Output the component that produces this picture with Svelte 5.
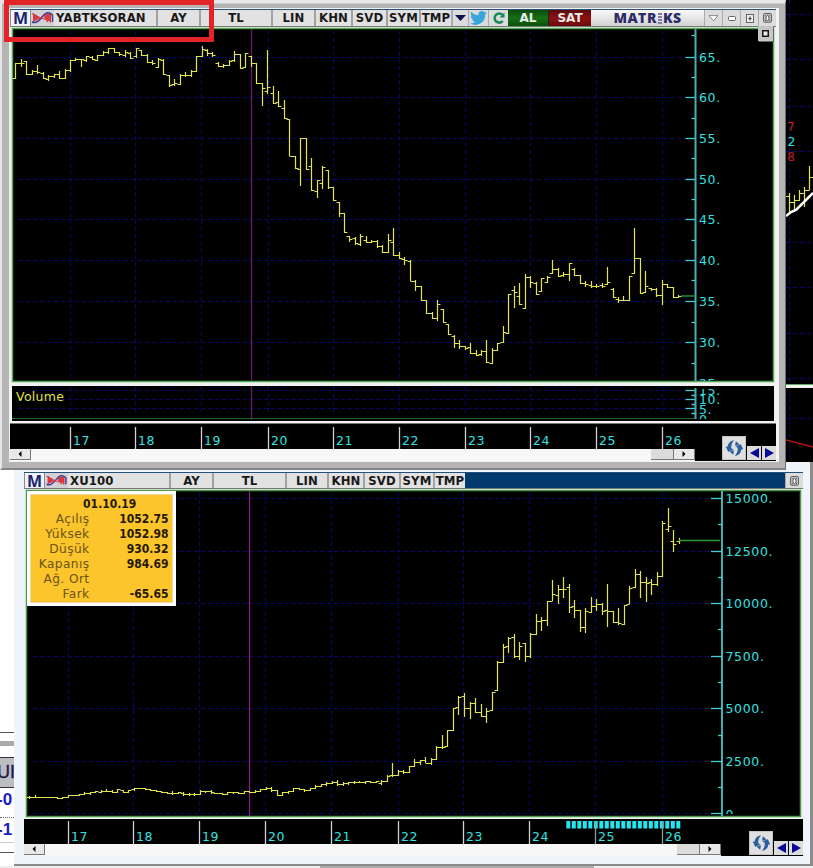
<script>
  // Bars are "high low open close", in thirds of a pixel below y0.
  const parse = (text, y0) =>
    text.trim().split(/\s*,\s*/).map((row) => row.split(' ').map((v) => y0 + Number(v) / 3));

  const ratio = [
    ...parse(`190 235 235 190,178 200 190 190,183 222 183 222,210 224 222 215,195 220 215 218,217 236 220 235,
      225 240 238 228,222 232 228 222,214 235 222 234,208 236 235 210,182 215 210 182,175 182 182 178,
      178 200 178 178,168 183 182 170,170 178 172 178,166 180 180 166,155 167 166 156,145 160 158 146,
      145 156 146 156,156 165 157 162,150 168 165 158,158 176 160 174,145 172 170 146,150 166 150 166,
      164 188 166 188,180 192 188 190,176 203 202 177,178 222 180 222,225 258 225 256,238 256 252 250,
      222 254 252 226,218 228 226 225,210 228 226 213,168 215 213 168,140 170 168 148,148 165 150 160,
      158 168 160 167,188 200 190 200,193 202 200 195,182 196 196 184,155 184 182 163`, 0),
    ...parse(`42 86 43 86,40 82 82 40,48 80 50 70,70 130 70 130,130 195 130 145,32 160 153 142,138 190 160 190,
      155 198 188 198,182 235 205 235,238 346 238 348,350 386 350 386,295 435 388 295,295 388 295 388,
      355 450 378 450,422 472 455 422,380 445 430 382,390 445 392 443,442 480 443 480,486 528 488 520,
      520 576 520 577,588 605 588 597,592 612 596 611,584 615 612 590,590 608 600 608,600 608 607 603,
      600 622 603 618,615 636 618 636,583 636 636 600,564 646 606 646,636 655 646 656`, 40),
    ...parse(`172 192 178 180,182 242 185 245,240 270 244 258,258 302 258 302,302 340 302 340,336 355 340 355,
      302 360 355 314,328 366 328 366,374 404 374 404,406 443 408 430,422 445 430 438,438 448 438 446,
      430 460 442 460,452 467 460 467,450 467 463 454,422 487 454 487,446 490 490 450,430 450 450 430,
      380 428 428 397,284 400 400 284,258 322 272 277,250 314 288 314,224 325 325 232,230 262 232 248,
      248 284 250 284,235 274 274 236,230 248 246 232,182 220 220 208,205 228 208 228,216 228 226 224,
      190 240 224 190,205 226 207 226,225 250 225 250,245 258 250 252,245 262 256 259,254 262 258 258,
      250 262 256 260,202 252 254 247,266 292 268 292,293 306 298 300,288 302 300 300,230 300 300 230,
      85 220 220 176,175 280 175 280,215 278 278 260,264 270 266 268,265 288 267 287,240 312 287 253,
      253 262 253 262,262 292 262 292,287 293 292 288`, 200)
  ];

  const index = [
    ...parse(`228 235 232 231,227 232 231 232,232 232 232 232,232 232 232 232,232 232 232 232,232 236 232 236,
      232 236 236 233,226 233 232 226,226 226 226 226,224 226 226 224,217 224 223 220,216 222 220 217,
      215 218 217 215,212 217 216 213,208 214 213 213,210 216 213 216,208 217 216 209,210 217 211 217,
      210 218 217 210,204 211 209 206,206 206 206 206,206 207 206 207,208 212 208 211,210 213 211 213,
      213 218 213 218,218 221 218 220,215 223 220 219,216 220 219 217,218 226 219 224,220 226 224 223,
      220 226 224 222,212 223 222 213,213 217 213 214,212 219 214 218,219 221 219 221,220 224 221 223,
      218 224 223 218,216 220 218 218,217 220 218 219,213 219 219 213,213 216 213 216,212 216 216 213,
      208 214 213 209,202 209 209 206,203 215 206 212,210 226 212 225,216 225 225 217,213 219 217 213,
      206 214 213 206,206 209 206 208,209 214 209 210,206 211 210 206,197 206 206 198,192 200 198 193,
      187 196 193 190,183 190 190 187,182 196 187 194,188 196 194 190,186 192 190 188,184 190 188 187,
      185 188 187 186,184 189 186 185,183 188 185 187,183 188 187 184`, 720),
    ...parse(`662 672 670 664,645 664 664 648,610 648 646 645,630 647 645 633,630 640 633 638,618 638 638 619,
      598 620 619 607,600 612 607 601,592 608 601 610,596 612 610 597,558 597 597 562,527 564 562 562,
      510 560 560 510,445 510 510 445,410 462 443 411,400 470 408 446,427 476 446 430,415 458 430 458,
      434 468 458 468,446 488 468 454,397 450 450 397,303 390 392 307,254 306 307 262,231 278 260 235,
      222 292 233 290,246 297 290 258,250 304 251 290,220 292 288 224,163 224 224 183,172 210 183 180,
      124 196 182 124,62 122 124 104,77 131 105 88,52 112 88 88,74 157 82 142,120 173 138 152,
      150 215 152 203,145 218 203 154,112 158 156 140,118 152 138 132,130 164 134 153,73 200 150 154,
      154 188 154 188,145 192 188 190,135 194 194 135,80 131 132 84,28 82 82 44,33 113 44 67,
      52 124 68 70,58 104 66 74,37 76 74 50,-117 48 50 -110,-155 -85 -93 -102,-88 -25 -57 -46,
      -65 -50 -57 -60`, 560)
  ];

  const snap = (v) => Math.floor(v) + 0.5;
  const barPath = (bars, x0, step) =>
    bars
      .map(([hi, lo, open, close], i) => {
        const x = snap(x0 + i * step);
        return `M${x - 3} ${snap(open)}H${x}M${x} ${snap(hi) - 0.5}V${snap(lo) + 0.5}M${x} ${snap(close)}H${x + 3}`;
      })
      .join('');

  const ratioPath = barPath(ratio, 15.7, 5.48);
  const indexPath = barPath(index, 29.6, 5.505);

  const years = [17, 18, 19, 20, 21, 22, 23, 24, 25, 26];
  const yearsA = [70.5, 135.5, 201.5, 268.5, 333.5, 399.5, 465.5, 530.5, 596.5, 662.5];
  const yearsB = [68.5, 133.5, 199.5, 265.5, 331.5, 398.5, 463.5, 529.5, 595.5, 662.5];
  const levelsA = [[65, 57.5], [60, 97.5], [55, 138.5], [50, 179.5], [45, 219.5], [40, 260.5], [35, 301.5], [30, 342.5], [25, 383.5]];
  const minorA = [35.5, 77.5, 118.5, 158.5, 199.5, 240.5, 280.5, 322.5, 363.5];
  const levelsB = [[15000, 498.5], [12500, 551.5], [10000, 603.5], [7500, 656.5], [5000, 708.5], [2500, 761.5]];
  const minorB = [524.5, 577.5, 629.5, 682.5, 735.5, 787.5];
  const volume = [[15, 390.5], [10, 399.5], [5, 408.5]];
  const blocks = Array.from({ length: 21 }, (_, i) => 566.3 + i * 5.5);

  const toolsA = [['AY', 43], ['TL', 72], ['LIN', 43], ['KHN', 37], ['SVD', 35], ['SYM', 33], ['TMP', 32]];
  const toolsB = [['AY', 43], ['TL', 73], ['LIN', 42], ['KHN', 36], ['SVD', 36], ['SYM', 34], ['TMP', 32]];
  const quote = [['Açılış', '1052.75'], ['Yüksek', '1052.98'], ['Düşük', '930.32'], ['Kapanış', '984.69'], ['Ağ. Ort', ''], ['Fark', '-65.65']];
</script>

{#snippet wave()}
  <svg class="wave" width="23" height="16" viewBox="0 0 23 16">
    <path d="M2 3V12L9 8.500ZM13 5.500L16 3.500L20 4V12.500H18.500V11H17V12H15.500V10H13.500Z" fill="#dc3a42" />
    <path d="M1 12C5 14 8 11 11 7S17 1 21.500 5V12" fill="none" stroke="#3a3c94" stroke-width="1.500" />
    <path d="M1 3.500C4 4 7 8 13 9" fill="none" stroke="#d8323c" stroke-width="1.200" />
  </svg>
{/snippet}

{#snippet closeIcon()}
  <svg width="9" height="10" viewBox="0 0 9 10">
    <rect x=".6" y=".6" width="7.8" height="8.6" rx="1" fill="#ccc" stroke="#555" />
    <ellipse cx="4.5" cy="5" rx="1.6" ry="2.6" fill="#fff" stroke="#444" stroke-width=".9" />
    <path d="M2 2.2l1.2 1.2M7 2.2L5.800 3.400M2 8l1.200-1.200M7 8L5.800 6.800" stroke="#444" stroke-width=".8" />
  </svg>
{/snippet}

{#snippet foot(xs, x0, width, dots)}
  <div class="foot">
    <div class="time" style="width: {width}px">
      <svg {width} height="25" viewBox="{x0} 0 {width} 25">
        {#if dots}
          {#each blocks as b}<rect x={b} y="2" width="4" height="7.500" fill="#25e6ee" />{/each}
        {/if}
        {#each xs as x, i}
          <path d="M{x} {dots ? 2 : 3}V25" stroke={dots && i > 7 ? '#8b9c9e' : '#d0d0d0'} stroke-width="1.3" />
          <text x={x + 2.5} y={dots ? 21.500 : 21} class="num">{years[i]}</text>
        {/each}
      </svg>
      <div class="scroll">
        <span class="sbtn"><svg width="4" height="6" viewBox="0 0 4 6"><path d="M3.500 0V6L.5 3Z" /></svg></span>
        <span class="track"></span>
        <span class="thumb"></span>
        <span class="sbtn"><svg width="4" height="6" viewBox="0 0 4 6"><path d="M.5 0V6L3.500 3Z" /></svg></span>
      </div>
    </div>
    <div class="nav">
      <span class="sync">
        <svg width="19" height="18" viewBox="0 0 19 18">
          <path d="M9.200 1.200C5.500 1.600 3 4 2.700 7.600L.8 7.800L3.200 12.800L8.600 10.800L6.300 9.200C6 6 7 3.500 9.200 1.200Z" fill="#2b5f9e" />
          <path d="M4.500 12.500L9 11.200L8.200 15.800L7 14.800Z" fill="#2b5f9e" />
          <path d="M9.800 16.800C13.500 16.400 16 14 16.300 10.400L18.200 10.200L15.800 5.200L10.400 7.200L12.700 8.800C13 12 12 14.500 9.800 16.800Z" fill="#2b5f9e" />
          <path d="M14.500 5.500L10 6.800L10.800 2.200L12 3.200Z" fill="#2b5f9e" />
        </svg>
      </span>
      <span class="step"><svg width="9" height="10" viewBox="0 0 9 10"><path d="M9 0V10L0 5Z" /></svg></span>
      <span class="step"><svg width="9" height="10" viewBox="0 0 9 10"><path d="M0 0V10L9 5Z" /></svg></span>
    </div>
  </div>
{/snippet}

<main class="desk">
  <aside class="list">
    <div class="rule r1"></div>
    <div class="bar"></div>
    <div class="head">UI</div>
    <div class="val v1">-0</div>
    <div class="val v2">-1</div>
    <div class="rule r2"></div>
  </aside>

  <svg class="behind" width="27" height="462" viewBox="786 0 27 462">
    <rect x="786" width="27" height="462" fill="#000" />
    <path d="M789.500 0V462M786 14.500H813M786 59.500H813M786 106.500H813M786 151.500H813M786 242.500H813M786 287.500H813M786 333.500H813M786 378.500H813M786 418.500H813" class="grid" />
    <text x="787" y="131" class="num" style="fill: #c41c1c">7</text>
    <text x="787.500" y="146" class="num">2</text>
    <text x="787" y="161" class="num" style="fill: #c41c1c">8</text>
    <path d="M786 196.500H789.500M789.500 193V212M789.500 202.500H794.500M794.500 195V210M794.500 200.500H799.500M799.500 190V201M799.500 193.500H804.500M804.500 187V207M804.500 190.500H809.500M809.500 166V190M809.500 177.500H813" class="bars" />
    <path d="M786 216L791 212L796 210L805 201L813 193" fill="none" stroke="#fff" stroke-width="2.500" />
    <rect x="786" y="384" width="27" height="4" fill="#eef5ee" />
    <path d="M786 384.500H813" stroke="#63a763" />
    <path d="M786 440L813 447" stroke="#b01216" stroke-width="1.300" />
  </svg>

  <section class="win second">
    <header class="tools">
      <b class="emblem">M</b>{@render wave()}
      <b class="sym s2">XU100</b>
      {#each toolsB as [name, w]}<b class="cell" style="width: {w}px">{name}</b>{/each}
      <span class="fill"></span>
      <span class="ctl">{@render closeIcon()}</span>
    </header>
    <svg class="plot" width="779" height="330" viewBox="24 489 779 330">
      <rect x="24" y="489" width="779" height="330" fill="#eef5ee" />
      <rect x="26.500" y="490.500" width="774" height="326" fill="#000" stroke="#4d9a4d" stroke-width="1.500" />
      {#each yearsB as x}<path d="M{x} 493V813" class="grid" />{/each}
      {#each levelsB as [, y]}<path d="M33 {y}H711" class="grid" />{/each}
      <path d="M33 813.500H711" class="grid" />
      <path d="M249.500 491V816" stroke="#8c1a92" stroke-width="1.200" />
      <path d="M722 491V816" stroke="#45b0b2" stroke-width="2" />
      {#each levelsB as [v, y]}
        <path d="M711 {y}H722" class="tick" />
        <text x="725.500" y={y + 4.500} class="num">{v}.</text>
      {/each}
      {#each minorB as y}<path d="M718 {y}H722" class="tick" />{/each}
      <path d="M711 813.500H722" class="tick" />
      <svg x="724" y="806" width="30" height="8" viewBox="724 806 30 8"><text x="725.500" y="818.500" class="num">0</text></svg>
      <path d={indexPath} class="bars" />
      <path d="M679 540.500H720" stroke="#2c9a35" stroke-width="1.400" />
    </svg>
    {@render foot(yearsB, 24, 697, true)}
    <div class="quote">
      <b class="date">01.10.19</b>
      {#each quote as [k, v]}<div class="row"><span>{k}</span><b>{v}</b></div>{/each}
    </div>
  </section>
  <div class="status"><i></i></div>

  <section class="win first">
    <header class="tools">
      <b class="emblem">M</b>{@render wave()}
      <b class="sym s1">YABTKSORAN</b>
      {#each toolsA as [name, w]}<b class="cell" style="width: {w}px">{name}</b>{/each}
      <span class="ctl drop"><svg width="11" height="6" viewBox="0 0 11 6"><path d="M0 0H11L5.500 6Z" fill="#10104e" /></svg></span>
      <span class="ctl bird">
        <svg width="17" height="14" viewBox="0 0 24 20"><path d="M24 2.400a9.800 9.800 0 0 1-2.800.8A5 5 0 0 0 23.300.5a10 10 0 0 1-3.100 1.200A4.900 4.900 0 0 0 11.800 6.200 14 14 0 0 1 1.700 1a4.900 4.900 0 0 0 1.500 6.600A4.900 4.900 0 0 1 1 7a4.900 4.900 0 0 0 4 4.900 5 5 0 0 1-2.200.1 4.900 4.900 0 0 0 4.600 3.400A9.900 9.900 0 0 1 0 17.500 14 14 0 0 0 21.500 5 10 10 0 0 0 24 2.400Z" fill="#36a6dd" /></svg>
      </span>
      <span class="ctl reload">
        <svg width="14" height="14" viewBox="0 0 14 14"><path d="M10.800 10A4.600 4.600 0 1 1 10.500 3.800" fill="none" stroke="#178a5c" stroke-width="2.600" /><path d="M7.500 6.500H12.500V1.500Z" fill="#178a5c" /></svg>
      </span>
      <b class="deal buy">AL</b>
      <b class="deal sell">SAT</b>
      <b class="logo"><span>MATR</span><i></i><span>KS</span></b>
      <span class="ctl"><svg width="11" height="7" viewBox="0 0 11 7"><path d="M1 .6H10L5.500 5.800Z" fill="#fff" stroke="#888" /></svg></span>
      <span class="ctl"><svg width="8" height="5" viewBox="0 0 8 5"><rect x=".5" y=".5" width="7" height="4" rx="1" fill="#fff" stroke="#666" /></svg></span>
      <span class="ctl"><svg width="8" height="9" viewBox="0 0 8 9"><rect x=".5" y=".5" width="7" height="8" fill="#eee" stroke="#666" /><path d="M4 2.500V6.500M2.500 4.500H5.500" stroke="#333" /></svg></span>
      <span class="ctl">{@render closeIcon()}</span>
    </header>
    <svg class="plot" width="766" height="356" viewBox="10 27 766 356">
      <rect x="10" y="27" width="766" height="356" fill="#e9f5e9" />
      <rect x="12.500" y="28.500" width="761" height="353" fill="#000" stroke="#55a855" stroke-width="1.500" />
      {#each yearsA as x}<path d="M{x} 31V380" class="grid" />{/each}
      {#each levelsA.slice(0, 8) as [, y]}<path d="M19 {y}H686" class="grid" />{/each}
      <path d="M251.500 29V381" stroke="#681a6c" stroke-width="1.300" />
      <path d="M695.500 29V381" stroke="#45b0b2" stroke-width="2" />
      {#each levelsA as [v, y], i}
        {#if i < 8}<path d="M685.500 {y}H695" class="tick" />{/if}
      {/each}
      {#each minorA as y}<path d="M691.500 {y}H695" class="tick" />{/each}
      <svg x="697" y="30" width="40" height="351" viewBox="697 30 40 351">
        {#each levelsA as [v, y]}<text x="699" y={y + 4.500} class="num">{v}.</text>{/each}
      </svg>
      <path d={ratioPath} class="bars" />
      <path d="M681 296H694" stroke="#2c8a2c" stroke-width="1.500" />
    </svg>
    <svg class="plot" width="766" height="41" viewBox="10 383 766 41">
      <rect x="10" y="383" width="766" height="41" fill="#f2f2f2" />
      <rect x="12" y="386" width="762" height="35" fill="#000" />
      <path d="M10 423.500H776" stroke="#777" />
      {#each yearsA as x}<path d="M{x} 387V414" class="grid" />{/each}
      {#each volume as [, y]}<path d="M19 {y}H686" class="grid" />{/each}
      <path d="M12 418.500H695" stroke="#176a17" />
      <path d="M251.500 386V420" stroke="#681a6c" stroke-width="1.300" />
      <path d="M695.500 388V419" stroke="#45b0b2" stroke-width="2" />
      <path d="M691.500 395.500H695M691.500 404.500H695M691.500 413.500H695" class="tick" />
      {#each volume as [, y]}<path d="M685.500 {y}H695" class="tick" />{/each}
      <svg x="697" y="389" width="40" height="30" viewBox="697 389 40 30">
        <text x="699" y="395" class="num">15.</text>
        <text x="699" y="404" class="num">10.</text>
        <text x="699" y="413.500" class="num">5.</text>
        <text x="699" y="423.500" class="num">0</text>
      </svg>
      <text x="16" y="401" class="vol">Volume</text>
    </svg>
    {@render foot(yearsA, 10, 685, false)}
    <span class="pin"></span>
  </section>

  <div class="marker"></div>
</main>

<style>
  :global(body) { margin: 0; background: #fff; }
  .desk {
    position: relative; width: 813px; height: 868px; overflow: hidden; background: #fff;
    font-family: "DejaVu Sans", Verdana, sans-serif; font-size: 12px; color: #181818;
  }
  svg { display: block; flex: none; }
  .grid { fill: none; stroke: #07076c; stroke-width: 1; stroke-dasharray: 4 3; }
  .tick { stroke: #45cfd2; stroke-width: 1.300; }
  .bars { fill: none; stroke: #e4e44c; stroke-width: 1.200; }
  .num { font: 12.500px "DejaVu Sans", sans-serif; letter-spacing: .65px; fill: #34e0e0; }
  .vol { font: 12.500px "DejaVu Sans", sans-serif; letter-spacing: .3px; fill: #e2e23c; }
  .behind { position: absolute; left: 786px; top: 0; }

  .win { position: absolute; box-sizing: border-box; display: flex; flex-direction: column; }
  .first {
    left: 0; top: 0; width: 786px; height: 470px; padding: 6px 9px 6px 8px; background: #b4b4b4;
    border: solid #e6e6e6; border-width: 3px 1px 2px 2px; border-right-color: #6a6a6a; border-bottom-color: #858585;
    box-shadow: inset 0 1px #cfcfcf;
  }
  .first::before {
    content: ""; position: absolute; left: 7px; top: 5px; right: 6px; bottom: 6px; background: #f3f3f3; z-index: -1;
  }
  .first { z-index: 2; isolation: isolate; }
  .second {
    left: 14px; top: 462px; width: 799px; height: 404px; padding: 10px 7px 8px 10px; background: #f0f4fb;
    border: solid #8b8b8b; border-width: 0 3px 2px 0;
  }

  .tools { display: flex; height: 18px; box-sizing: border-box; background: #8a8a8a; border-top: 1px solid #24507a; border-bottom: 1px solid #777; }
  .second .tools { height: 17px; }
  .emblem { width: 19px; height: 16px; margin-left: 1px; background: #f2f3fa; color: #20226e; font: 700 16px/17px "Open Sans", sans-serif; text-align: center; }
  .wave { background: #d2d2d6; margin-left: 1px; }
  .sym, .cell, .deal, .ctl, .logo { box-sizing: border-box; display: flex; align-items: center; height: 16px; white-space: nowrap; }
  .sym, .cell { background: #e2e2e2; font-size: 11.700px; letter-spacing: .12px; line-height: 16px; }
  .second .tools > * { height: 15px; }
  .second .emblem { line-height: 17px; }
  .sym { padding-left: 2px; }
  .s1 { width: 102px; }
  .s2 { width: 101px; }
  .cell { justify-content: center; border-left: 2px solid #a2a2a2; }
  .ctl { justify-content: center; width: 18px; background: #dcdcdc; border-left: 1px solid #aaa; }
  .drop { width: 17px; border-left-width: 2px; }
  .bird { width: 20px; }
  .reload { width: 20px; }
  .deal { justify-content: center; color: #e8efe8; font-size: 12px; }
  .buy { width: 41px; background: linear-gradient(#0b4a0b, #176f17 50%, #0a520a); border-right: 1px solid #063006; }
  .sell { width: 42px; background: linear-gradient(#5c0a0a, #8c1014 50%, #6b0a0c); }
  .logo { flex: 1; justify-content: center; gap: 1px; background: linear-gradient(#fafafa, #d2d2d2); color: #2c2d68; font: 800 14px/16px "Open Sans", sans-serif; letter-spacing: .5px; }
  .logo i { width: 4px; height: 11px; background: repeating-linear-gradient(#7d7fa6 0 2px, transparent 2px 3px); }
  .fill { flex: 1; background: #033a6e; }

  .foot { display: flex; height: 37px; background: #000; justify-content: space-between; }
  .scroll { display: flex; height: 12px; background: #f6f6f6; }
  .sbtn, .thumb { box-sizing: border-box; display: flex; align-items: center; justify-content: center; width: 21px; height: 11px; background: #e8e8e8; border: solid #777; border-width: 0 1.500px 1.500px 0; }
  .thumb { width: 23px; background: #dcdcdc; }
  .track { flex: 1; background: #f7f7f7; }
  .nav { display: flex; align-items: flex-end; padding-bottom: 1px; }
  .sync { display: flex; align-items: center; justify-content: center; width: 24px; height: 24px; background: #e0e0e0; box-shadow: inset 0 0 0 1px #c3c3c3; }
  .step { display: flex; align-items: center; justify-content: center; width: 14px; height: 14px; margin-left: 1px; background: #dcdcdc; }
  .step path { fill: #0a0a96; }

  .pin { position: absolute; left: 756px; top: 23px; width: 7px; height: 7px; border: 4px solid #c6c6c6; background: #eee; box-shadow: inset 0 0 0 1.500px #151515, 1px 1px #666; }

  .quote { position: absolute; left: 13px; top: 29px; box-sizing: border-box; width: 149px; height: 115px; padding: 3px 4.500px 0 0; background: #fbc52b; border: 3px solid #fff; box-shadow: inset 0 0 0 1px #ead9a6; line-height: 15px; color: #241803; }
  .quote b { font-family: "DejaVu Sans Condensed", "DejaVu Sans", sans-serif; font-stretch: condensed; font-size: 12px; }
  .date { display: block; padding-left: 21px; text-align: center; }
  .row { display: flex; justify-content: space-between; height: 15px; }
  .row span { width: 59.500px; text-align: right; color: #6b531a; font-size: 12.200px; letter-spacing: .4px; }

  .list { position: absolute; left: 0; top: 470px; width: 14px; height: 398px; overflow: hidden; background: #fff; font: 700 18px/29px "Liberation Sans", sans-serif; }
  .rule { height: 1px; background: #555; }
  .r1 { margin-top: 262px; }
  .bar { height: 5px; margin-top: 8px; background: #aaa; }
  .head { box-sizing: border-box; height: 31px; margin-top: 11px; border: solid #333; border-width: 1px 0; background: #bebec2; color: #1b1b4a; text-indent: -3px; font-weight: 400; font-size: 18px; -webkit-text-stroke: .4px; }
  .val { height: 29px; line-height: 23px; color: #1a1ac8; text-indent: -3px; font-size: 17px; }
  .v1 { border-bottom: 1px dotted #666; }
  .v2 { height: 24px; border-bottom: 1px solid #ccc; }
  .r2 { margin-top: 9px; }

  .status { position: absolute; left: 0; top: 866px; width: 813px; height: 2px; background: #eceef0; }
  .status i { display: block; margin-left: 320px; width: 274px; height: 2px; background: #aaa; }
  .marker { position: absolute; z-index: 3; left: 4px; top: 0; width: 210px; height: 42px; box-sizing: border-box; border: 5px solid #e42329; }
</style>
